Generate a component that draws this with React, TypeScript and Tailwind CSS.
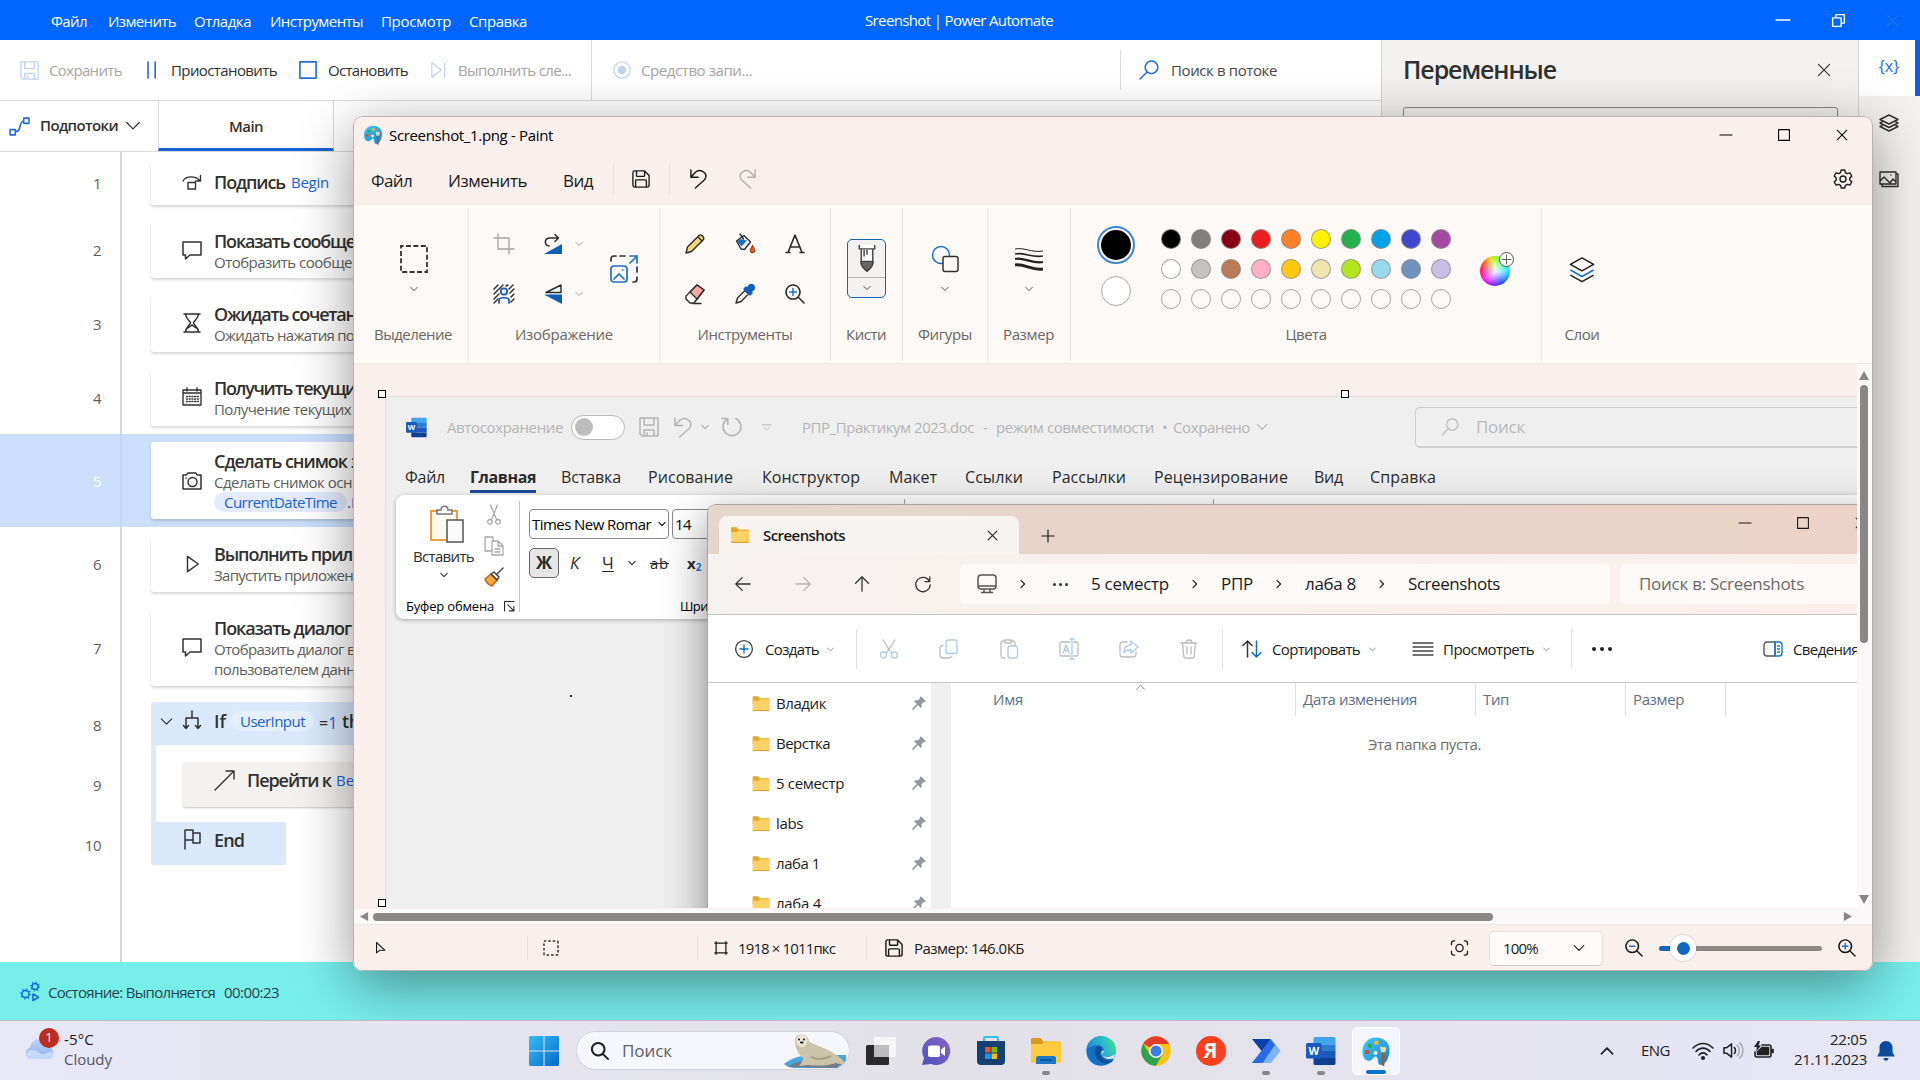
import { useLayoutEffect, useRef, type ReactNode } from "react";

/* Label whose letter spacing is adjusted so the text fills its slot. */
function T({ className = "", children }: { className?: string; children: string }) {
  const box = useRef<HTMLDivElement>(null);
  const text = useRef<HTMLSpanElement>(null);
  useLayoutEffect(() => {
    const b = box.current;
    const t = text.current;
    if (!b || !t) return;
    t.style.letterSpacing = "0px";
    const diff = b.clientWidth - t.getBoundingClientRect().width;
    t.style.letterSpacing = `${diff / children.length}px`;
  }, [children]);
  return (
    <div ref={box} className={`shrink-0 whitespace-pre ${className}`}>
      <span ref={text}>{children}</span>
    </div>
  );
}

/* Stroked icon on a 20-unit grid. */
function I({ d, className = "size-5", sw = 1.3, children }: { d?: string; className?: string; sw?: number; children?: ReactNode }) {
  return (
    <svg viewBox="0 0 20 20" className={`shrink-0 overflow-visible ${className}`} fill="none" stroke="currentColor" strokeWidth={sw} strokeLinecap="round" strokeLinejoin="round">
      {d && <path d={d} />}
      {children}
    </svg>
  );
}

const Chev = ({ className = "w-[10px] h-[10px]", sw = 2.2 }: { className?: string; sw?: number }) => <I className={className} sw={sw} d="M2 6l8 8 8-8" />;
const ChevR = () => <I className="ml-[22px] h-[12px] w-[8px]" sw={2.8} d="M5 1l9 9-9 9" />;
const Sep = ({ className = "" }: { className?: string }) => <div className={`w-px shrink-0 ${className}`} />;

const CLOSE = "M2 2l16 16M18 2L2 18";
const SAVE = "M3 1h11l5 5v11a2 2 0 0 1-2 2H3a2 2 0 0 1-2-2V3a2 2 0 0 1 2-2zM5 1v5a1 1 0 0 0 1 1h7a1 1 0 0 0 1-1V1M4 19v-7a1 1 0 0 1 1-1h10a1 1 0 0 1 1 1v7";
const SAVE_SQ = "M1 1h18v18H3l-2-2zM5 1v7h10V1M5 19v-6h10v6M8 19v-3";
const UNDO = "M1 0v8h8M1 8l5-5.500C11-2 21 3 16.500 10.500L6 20";
const SEARCH = "M7.8 12.2L1 19M12.5 1a6.3 6.3 0 1 0 .01 0z";
const ZOOM = "M8 1a7 7 0 1 0 .01 0zM13 13l6 6";

const MSG = "M1 2h18v13H8l-4.5 4V15H1z";

function Folder({ className = "w-[18px] h-[16px]" }: { className?: string }) {
  return (
    <svg viewBox="0 0 18 16" className={`shrink-0 ${className}`}>
      <path d="M0 1.5C0 .7.5.2 1.2.2h4.6L7.8 2.500H16.500c1 0 1.500.5 1.500 1.300V8H0z" fill="#e6a921" />
      <path d="M0 5h6.500l1.500-1.600h10V15a1 1 0 0 1-1 1H1a1 1 0 0 1-1-1z" fill="#fdd367" />
      <path d="M0 14.800h18V15a1 1 0 0 1-1 1H1a1 1 0 0 1-1-1z" fill="#e0a32a" />
    </svg>
  );
}

function Palette({ className = "" }: { className?: string }) {
  return (
    <svg viewBox="0 0 28 30" className={`shrink-0 ${className}`}>
      <defs>
        <linearGradient id="pal" x1="0" y1="0" x2="1" y2="1">
          <stop offset="0" stopColor="#43cdf5" />
          <stop offset="1" stopColor="#1180cf" />
        </linearGradient>
      </defs>
      <path d="M14 .5C22 .5 28 6 28 13c0 8-4 16-9 16-4 0-2-6-4.500-8.500-3-1.500-4 5-8 4C2 24.500 0 20 0 14.500 0 7 6 .5 14 .5z" fill="url(#pal)" />
      <circle cx="14.500" cy="6" r="2.400" fill="#f8b62d" />
      <circle cx="7.500" cy="9" r="2.400" fill="#2fa84f" />
      <circle cx="4.800" cy="15.500" r="2.400" fill="#c5502c" />
      <circle cx="13.500" cy="16.500" r="2" fill="#fff" />
      <path d="M18 10l1.500 6h4L25 10l-1.500 1-1.200-1.400L21 11l-1.300-1.300z" fill="#f2d6a8" />
      <path d="M20 16h3l-.5 14h-2z" fill="#a8581f" />
    </svg>
  );
}

function WordLogo({ className = "" }: { className?: string }) {
  return (
    <svg viewBox="0 0 30 30" className={`shrink-0 ${className}`}>
      <path d="M9 1h19a1.500 1.500 0 0 1 1.500 1.500V8.500H7.500v-6A1.500 1.500 0 0 1 9 1z" fill="#41a5ee" />
      <path d="M7.500 8.500h22V15h-22z" fill="#2b7cd3" />
      <path d="M7.500 15h22v7h-22z" fill="#185abd" />
      <path d="M7.500 22h22v5.500A1.500 1.500 0 0 1 28 29H9a1.500 1.500 0 0 1-1.500-1.500z" fill="#103f91" />
      <rect x="0" y="7" width="15.500" height="15.500" rx="1.500" fill="#185abd" />
      <text x="7.750" y="18.800" textAnchor="middle" fontSize="11" fontWeight="700" fill="#fff">W</text>
    </svg>
  );
}

/* ---------- Power Automate ---------- */

const paMenu = [
  ["Файл", "w-[36px] mr-[21px]"],
  ["Изменить", "w-[68px] mr-[18px]"],
  ["Отладка", "w-[57px] mr-[19px]"],
  ["Инструменты", "w-[93px] mr-[18px]"],
  ["Просмотр", "w-[70px] mr-[18px]"],
  ["Справка", "w-[58px]"],
];

function TitleBar() {
  return (
    <div className="flex h-10 shrink-0 items-center bg-[#0066ff] pl-[51px] text-[15px] text-white">
      {paMenu.map(([t, c]) => (
        <T key={t} className={`mt-[2px] ${c}`}>{t}</T>
      ))}
      <T className="ml-[338px] w-[188px]">Sreenshot | Power Automate</T>
      <div className="mr-px ml-auto flex">
        <div className="grid w-14 place-items-center"><I className="size-[14px]" sw={2} d="M0 10h20" /></div>
        <div className="grid w-[54px] place-items-center"><I className="size-[13px]" sw={2.2} d="M1 6h13v13H1zM6 5V1h13v13h-4" /></div>
        <div className="grid w-[54px] place-items-center text-[#3c7ee8]"><I className="size-[13px]" sw={1.5} d={CLOSE} /></div>
      </div>
    </div>
  );
}

function Toolbar() {
  return (
    <div className="flex h-[61px] shrink-0 items-center border-b border-[#dcdcdc] bg-white pl-5 text-[15px] text-[#323130]">
      <I className="size-[19px] text-[#bfd3f5]" sw={1.4} d={SAVE_SQ} />
      <T className="ml-[10px] w-[73px] text-[#a8a6a4]">Сохранить</T>
      <I className="ml-[22px] h-4 w-4 text-[#2469e0]" sw={2} d="M5 0v20M14 0v20" />
      <T className="ml-[11px] w-[106px]">Приостановить</T>
      <I className="ml-[22px] size-[18px] text-[#2469e0]" sw={1.8} d="M1 1h18v18H1z" />
      <T className="ml-[11px] w-[80px]">Остановить</T>
      <I className="ml-[22px] h-[16px] w-[18px] text-[#bfd3f5]" sw={1.4} d="M1 1l12 9-12 9zM17 1v18" />
      <T className="ml-[10px] w-[113px] text-[#a8a6a4]">Выполнить сле...</T>
      <Sep className="ml-[20px] h-[60px] bg-[#dcdcdc]" />
      <I className="ml-[21px] size-[18px] text-[#bfd3f5]" sw={1.3}>
        <circle cx="10" cy="10" r="9" />
        <circle cx="10" cy="10" r="4" fill="currentColor" />
      </I>
      <T className="ml-[10px] w-[111px] text-[#a8a6a4]">Средство запи...</T>
      <Sep className="ml-[368px] h-[40px] bg-[#dcdcdc]" />
      <I className="ml-[18px] size-5 text-[#2469e0]" sw={1.4} d={SEARCH} />
      <T className="ml-[12px] w-[106px] text-[#4a4947]">Поиск в потоке</T>
    </div>
  );
}

function Tabs() {
  return (
    <div className="flex h-[51px] shrink-0 items-center border-b border-[#dcdcdc] bg-white text-[#323130]">
      <I className="ml-[9px] size-[21px] text-[#2469e0]" sw={1.5} d="M1 13h5v5H1zM14 2h5v5h-5zM6 15c3 0 4-2 4.500-5S12 5 14 4.500" />
      <T className="mb-[2px] ml-[10px] w-[78px] text-[15px] font-semibold">Подпотоки</T>
      <I className="ml-[8px] size-[14px]" sw={1.7} d="M1 5l9 9 9-9" />
      <div className="ml-[18px] flex h-full w-[176px] items-center justify-center border-x border-b-[3px] border-x-[#dcdcdc] border-b-[#1863d6]">
        <T className="mt-[3px] w-[34px] text-[15px] font-semibold">Main</T>
      </div>
    </div>
  );
}

function Row({ n, h, active, children }: { n: string; h: string; active?: boolean; children: ReactNode }) {
  return (
    <div className={`flex shrink-0 ${h} ${active ? "bg-[#cbdffc]" : ""}`}>
      <div className={`flex h-full w-[122px] shrink-0 items-center justify-end border-r-2 pt-[2px] pr-[19px] text-[15px] tracking-[-0.5px] ${active ? "border-[#c3d7f5] text-white" : "border-[#d8d8d8] text-[#605e5c]"}`}>{n}</div>
      <div className="ml-[29px] flex flex-1 flex-col">{children}</div>
    </div>
  );
}

const Card = ({ icon, pad = "pt-[1px]", children }: { icon: ReactNode; pad?: string; children: ReactNode }) => (
  <div className="mt-2 mb-[8px] flex flex-1 items-center rounded-[3px] bg-white shadow-[0_2px_3px_rgba(0,0,0,0.16)]">
    <div className="ml-[31px] flex w-5 justify-center text-[#323130]">{icon}</div>
    <div className={`ml-[12px] flex-1 text-[15px] leading-[20px] text-[#605e5c] ${pad}`}>{children}</div>
  </div>
);

const H = ({ className, children }: { className: string; children: string }) => (
  <T className={`text-[18px] leading-[22px] font-semibold text-[#323130] ${className}`}>{children}</T>
);

function Actions() {
  return (
    <div className="flex flex-1 flex-col bg-white">
      <Row n="1" h="h-[61px]">
        <Card pad="pb-[2px]" icon={<I className="size-5" sw={1.4} d="M1 8c3-5.500 13-5.500 17 0M18.500 2.500V8h-5M6 9.500h7.500v6.500H6z" />}>
          <div className="flex items-center">
            <H className="w-[71px]">Подпись</H>
            <T className="ml-[6px] w-[38px] text-[#1863d6]">Begin</T>
          </div>
        </Card>
      </Row>
      <Row n="2" h="h-[73px]">
        <Card pad="pt-[3px]" icon={<I sw={1.5} d={MSG} />}>
          <H className="w-[141px]">Показать сообще</H>
          <T className="w-[138px]">Отобразить сообще</T>
        </Card>
      </Row>
      <Row n="3" h="h-[74px]">
        <Card pad="pt-[2px]" icon={<I sw={1.5} d="M2 1h16M2 19h16M3.500 1c0 5 5 7 5 9s-5 4-5 9M16.500 1c0 5-5 7-5 9s5 4 5 9M6 15l4-3 4 3" />}>
          <H className="w-[142px]">Ожидать сочетан</H>
          <T className="w-[140px]">Ожидать нажатия по</T>
        </Card>
      </Row>
      <Row n="4" h="h-[74px]">
        <Card pad="pt-[2px]" icon={<I sw={1.4}><path d="M1 3h18v15H1zM1 6h18M5 1v3M15 1v3" /><path d="M4.500 9.500h12M4.500 12h12M4.500 14.500h12" strokeDasharray="1 1.700" /></I>}>
          <H className="w-[142px]">Получить текущи</H>
          <T className="w-[137px]">Получение текущих</T>
        </Card>
      </Row>
      <Row n="5" h="h-[93px]" active>
        <Card pad="pt-0" icon={<I sw={1.5}><path d="M1 4h3l2-2h8l1 2h4v14H1z" /><circle cx="10.500" cy="11" r="4.500" /><path d="M4 7h.1" /></I>}>
          <div className="flex overflow-hidden"><H className="w-[133px]">Сделать снимок</H><H className="ml-[4px] w-[8px]">э</H></div>
          <T className="w-[138px]">Сделать снимок осн</T>
          <div className="flex items-center">
            <div className="flex h-[20px] w-[133px] items-center justify-center rounded-full bg-[#e3ecfd] text-[#1863d6]">
              <T className="w-[113px]">CurrentDateTime</T>
            </div>
            <span className="text-[#1863d6]">.F</span>
          </div>
        </Card>
      </Row>
      <Row n="6" h="h-[73px]">
        <Card icon={<I className="size-[18px]" sw={1.6} d="M5 1.500l12 8.500-12 8.500z" />}>
          <H className="w-[138px]">Выполнить прил</H>
          <T className="w-[139px]">Запустить приложен</T>
        </Card>
      </Row>
      <Row n="7" h="h-[94px]">
        <Card icon={<I sw={1.5} d={MSG} />}>
          <H className="w-[137px]">Показать диалог</H>
          <T className="w-[141px]">Отобразить диалог в</T>
          <T className="w-[141px]">пользователем данн</T>
        </Card>
      </Row>
      <Row n="8" h="h-[60px]">
        <div className="mt-2 flex h-[43px] shrink-0 items-start rounded-t-[3px] bg-[#dbe8fd] pt-[8px] text-[#323130]">
          <Chev className="mt-[5px] ml-[9px] size-[13px]" sw={1.8} />
          <I className="mt-[1px] ml-[9px] size-5" sw={1.5} d="M10 0v6M4 17V7h12v10M1.500 14.500L4 17.500l2.500-3M13.500 14.500l2.500 3 2.500-3" />
          <H className="ml-[12px] w-[12px]">If</H>
          <div className="mt-px ml-[5px] flex h-[20px] w-[83px] items-center justify-center rounded-full bg-[#e6effe] text-[15px] text-[#1863d6]">
            <T className="w-[65px]">UserInput</T>
          </div>
          <div className="mt-[1px] ml-[5px] w-[23px] text-[16px]">=<span className="text-[#1863d6]">1</span></div>
          <H className="w-[18px]">th</H>
        </div>
        <div className="w-[5px] flex-1 bg-[#dbe8fd]" />
      </Row>
      <Row n="9" h="h-[60px]">
        <div className="flex h-full border-l-[5px] border-[#dbe8fd]">
          <div className="mt-2 ml-[27px] flex h-[45px] flex-1 items-start rounded-[3px] bg-[#f3f2f1] pt-[7px] shadow-[0_1px_2px_rgba(0,0,0,0.22)]">
            <I className="mt-[1px] ml-[32px] size-5 text-[#323130]" sw={1.4} d="M0 20L19 1M11 1h8v8" />
            <H className="ml-[12px] w-[84px]">Перейти к</H>
            <T className="ml-[5px] w-[18px] text-[15px] text-[#1863d6]">Be</T>
          </div>
        </div>
      </Row>
      <Row n="10" h="h-[60px]">
        <div className="h-[8px] w-[5px] shrink-0 bg-[#dbe8fd]" />
        <div className="flex h-[43px] w-[135px] shrink-0 rounded-[3px] rounded-tl-none bg-[#dbe8fd] pt-[7px]">
          <I className="ml-[32px] size-5 text-[#323130]" sw={1.5} d="M2 20V1h8v10H2M10 4h7v10h-7V11" />
          <H className="ml-[11px] w-[30px]">End</H>
        </div>
      </Row>
      <Row n="" h="flex-1">
        <div />
      </Row>
    </div>
  );
}

function SidePanel() {
  return (
    <>
      <div className="w-[478px] shrink-0 border-x border-[#d5d4d3] bg-[#f3f2f1] pl-[21px]">
        <div className="mt-[14px] flex h-[32px] items-center text-[#323130]">
          <T className="w-[153px] text-[25px] font-semibold">Переменные</T>
          <I className="ml-[261px] size-[14px]" sw={1.6} d={CLOSE} />
        </div>
        <div className="mt-[21px] h-[44px] w-[435px] rounded-[3px] border border-[#8a8886]" />
      </div>
      <div className="flex flex-1 flex-col bg-[#f3f2f1] text-[#323130]">
        <div className="flex h-[56px] items-center border-r-[5px] border-[#0a5cf0] bg-white pb-[4px] pl-[19px] text-[#1f66e5]">
          <span className="w-[22px] text-center text-[16px]">{"{x}"}</span>
        </div>
        <div className="flex h-[56px] items-center pb-[2px] pl-[20px]">
          <I className="size-5" sw={1.4} d="M10 2l9 4.500-9 4.500-9-4.500zM3 9l-2 1 9 4.500 9-4.500-2-1M3 12.500l-2 1 9 4.500 9-4.500-2-1" />
        </div>
        <div className="flex h-[56px] items-center pb-[2px] pl-[20px]">
          <I className="size-5" sw={1.4} d="M1 3h16v12H1zM17 5h2v12.500H3V15M1 12l4-4 6 6 3-4 3 3M12 6h.1" />
        </div>
      </div>
    </>
  );
}

function StatusBar() {
  return (
    <div className="flex h-[58px] shrink-0 items-center bg-[#78eeeb] pt-[2px] pl-5 text-[15px] text-[#27434d]">
      <I className="size-[20px] text-[#1668dc]" sw={1.6}>
        <circle cx="5.500" cy="12" r="3.600" />
        <circle cx="5.500" cy="12" r="5" strokeDasharray="1 2.920" strokeLinecap="butt" />
        <circle cx="15" cy="4.500" r="3" />
        <circle cx="15" cy="4.500" r="4.300" strokeDasharray="1 2.380" strokeLinecap="butt" />
        <path d="M13 12l5.500 3.300-5.500 3.200z" />
      </I>
      <T className="ml-2 w-[167px]">Состояние: Выполняется</T>
      <T className="ml-[9px] w-[55px]">00:00:23</T>
    </div>
  );
}

/* ---------- Explorer ---------- */

const sideFolders = [
  ["Владик", "w-[50px]"],
  ["Верстка", "w-[54px]"],
  ["5 семестр", "w-[68px]"],
  ["labs", "w-[27px]"],
  ["лаба 1", "w-[44px]"],
  ["лаба 4", "w-[45px]"],
];

function Explorer() {
  return (
    <div className="absolute top-[107px] left-[321px] flex h-[405px] w-[1151px] flex-col overflow-hidden rounded-tl-[9px] border-t border-l border-[#a9a4a1] bg-white text-[15px] text-[#1b1b1b]">
      <div className="flex h-[49px] shrink-0 bg-gradient-to-r from-[#e5d6cb] via-[#e8d4ca] via-50% to-[#edd2c7]">
        <div className="mt-[11px] ml-[11px] flex h-[38px] w-[300px] shrink-0 items-center rounded-t-[8px] bg-[#f7f3f0] pl-[12px]">
          <Folder />
          <T className="ml-[14px] w-[82px] font-semibold">Screenshots</T>
          <I className="ml-[142px] size-[11px]" sw={1.9} d={CLOSE} />
        </div>
        <I className="mt-[25px] ml-[23px] size-[12px]" sw={2} d="M10 0v20M0 10h20" />
        <div className="mt-[12px] ml-[685px] flex h-[12px] gap-[46px]">
          <I className="size-[12px]" sw={1.8} d="M0 10h20" />
          <I className="size-[12px]" sw={1.8} d="M1 1h18v18H1z" />
          <I className="size-[12px]" sw={1.8} d={CLOSE} />
        </div>
      </div>
      <div className="flex h-[60px] shrink-0 items-center bg-gradient-to-r from-[#f6f2ef] to-[#fbefec] pl-[27px] text-[#333]">
        <I className="size-4" sw={1.6} d="M19 10H1M9 2l-8 8 8 8" />
        <I className="ml-[44px] size-4 text-[#b9b5b3]" sw={1.6} d="M1 10h18M11 2l8 8-8 8" />
        <I className="ml-[43px] size-4" sw={1.6} d="M10 19V1M2 9l8-8 8 8" />
        <I className="ml-[45px] size-4" sw={1.6} d="M18.500 1v6h-6M18 6.500A9 9 0 1 0 19 11" />
        <div className="ml-[29px] flex h-10 w-[650px] shrink-0 items-center rounded-[5px] bg-[#fcfaf9] pl-[17px] text-[17px] text-[#1b1b1b]">
          <I className="size-5 text-[#555]" sw={1.5} d="M4 1h12a3 3 0 0 1 3 3v8a3 3 0 0 1-3 3H4a3 3 0 0 1-3-3V4a3 3 0 0 1 3-3zM1 12h18M7 15v3.500M13 15v3.500M4.500 18.500h11" />
          <ChevR />
          <div className="ml-[26px] flex w-[16px] gap-[3px]">
            <i className="size-[3px] rounded-full bg-[#333]" /><i className="size-[3px] rounded-full bg-[#333]" /><i className="size-[3px] rounded-full bg-[#333]" />
          </div>
          <T className="ml-[22px] w-[78px]">5 семестр</T>
          <ChevR />
          <T className="ml-[22px] w-[32px]">РПР</T>
          <ChevR />
          <T className="ml-[22px] w-[51px]">лаба 8</T>
          <ChevR />
          <T className="ml-[22px] w-[92px]">Screenshots</T>
        </div>
        <div className="ml-[10px] flex h-10 flex-1 items-center rounded-l-[5px] bg-[#fdf9f8] pl-[19px] text-[17px] text-[#6b6967]">
          <T className="w-[165px]">Поиск в: Screenshots</T>
        </div>
      </div>
      <div className="flex h-[69px] shrink-0 items-center border-y border-[#c9c6c4] pt-px pl-[27px]">
        <I className="size-[18px]" sw={1.5}>
          <circle cx="10" cy="10" r="9.300" stroke="#444" /><path d="M10 5.500v9M5.500 10h9" stroke="#0f6cbd" />
        </I>
        <T className="ml-[12px] w-[54px]">Создать</T>
        <Chev className="ml-[8px] size-[7px] text-[#777]" />
        <Sep className="ml-[22px] h-10 bg-[#e3e3e3]" />
        <div className="ml-[22px] flex gap-10 text-[#a9cbea]">
          <I sw={1.3}><path d="M4 1l8.500 13M16 1L7.500 14" stroke="#bdbdbd" /><circle cx="4.500" cy="16" r="3" /><circle cx="15.500" cy="16" r="3" /></I>
          <I sw={1.3}><path d="M4 6.500c-2 0-3 1-3 2.500v7c0 2 1 3 3 3h6c1.500 0 2.500-1 3-2" stroke="#bdbdbd" /><rect x="7" y="1" width="11" height="13.500" rx="2" /></I>
          <I sw={1.3}><path d="M6 19H4a2 2 0 0 1-2-2V4a2 2 0 0 1 2-2h2M12 2h2a2 2 0 0 1 2 2v2M6 1h6v3H6z" stroke="#bdbdbd" /><rect x="9" y="7" width="9.500" height="12" rx="2" /></I>
          <I sw={1.3}><path d="M11 3H3a2 2 0 0 0-2 2v10a2 2 0 0 0 2 2h8M15 3h2a2 2 0 0 1 2 2v10a2 2 0 0 1-2 2h-2" stroke="#bdbdbd" /><path d="M13 0v20M11 0h4M11 20h4M4 14l3.200-8 3.200 8M5 11.500h4.400" /></I>
          <I sw={1.3}><path d="M8 3H4a3 3 0 0 0-3 3v9a3 3 0 0 0 3 3h10a3 3 0 0 0 3-3v-2" stroke="#bdbdbd" /><path d="M12 2l7 6-7 6v-3.500c-3 0-5 .5-7 3.500 0-5 3-8 7-8.500z" /></I>
          <I sw={1.3}><path d="M2 4h16M3.500 4l1.300 13a2 2 0 0 0 2 2h6.400a2 2 0 0 0 2-2l1.300-13M7 4a3 3 0 0 1 6 0M8 8v7M12 8v7" stroke="#bdbdbd" /></I>
        </div>
        <Sep className="ml-[23px] h-10 bg-[#e3e3e3]" />
        <I className="ml-[19px] size-5" sw={1.5}><path d="M5.500 18V2M1 6.500L5.500 2 10 6.500" stroke="#333" /><path d="M14.500 2v16M10 13.500l4.500 4.500 4.500-4.500" stroke="#0f6cbd" /></I>
        <T className="ml-[10px] w-[88px]">Сортировать</T>
        <Chev className="ml-[9px] size-[7px] text-[#777]" />
        <I className="ml-[37px] size-5 text-[#444]" sw={1.3} d="M0 4h20M0 8h20M0 12h20M0 16h20" />
        <T className="ml-[10px] w-[91px]">Просмотреть</T>
        <Chev className="ml-[9px] size-[7px] text-[#777]" />
        <Sep className="ml-[21px] h-10 bg-[#e3e3e3]" />
        <div className="ml-[20px] flex w-[20px] shrink-0 gap-[4px]">
          <i className="size-[4px] rounded-full bg-[#222]" /><i className="size-[4px] rounded-full bg-[#222]" /><i className="size-[4px] rounded-full bg-[#222]" />
        </div>
        <I className="ml-[151px] size-5" sw={1.4}>
          <path d="M12 3H4a3 3 0 0 0-3 3v8a3 3 0 0 0 3 3h8z" stroke="#555" /><path d="M12 3h4a3 3 0 0 1 3 3v8a3 3 0 0 1-3 3h-4zM14.500 7h2M14.500 10h2M14.500 13h2" stroke="#0f78d4" />
        </I>
        <T className="ml-[10px] w-[66px]">Сведения</T>
      </div>
      <div className="flex flex-1 overflow-hidden">
        <div className="w-[223px] shrink-0">
          {sideFolders.map(([t, c]) => (
            <div key={t} className="flex h-10 items-center pl-[44px]">
              <Folder className="h-[15px] w-[18px]" />
              <T className={`ml-[6px] ${c}`}>{t}</T>
              <svg viewBox="0 0 20 20" className="mr-[5px] ml-auto size-[14px] fill-[#8f969c]"><path d="M12.500 0L20 7.500l-2 1-1-.3-3.500 3.500c.7 2 .3 4-1 5.300l-4-4L1.500 20 0 18.500 7 11.500l-4-4C4.300 6.200 6.300 5.800 8.300 6.500L11.800 3l-.3-1z" /></svg>
            </div>
          ))}
        </div>
        <div className="w-5 shrink-0 bg-[#f0f0f0]" />
        <div className="flex-1">
          <div className="flex h-[33px] items-center text-[#5c6f8a]">
            <div className="flex h-full w-[345px] items-center border-r border-[#e0e0e0] pl-[42px]">
              <T className="w-[30px]">Имя</T>
              <I className="mb-[24px] ml-[113px] size-[9px] text-[#777]" sw={2} d="M1 14l9-9 9 9" />
            </div>
            <div className="flex h-full w-[180px] items-center border-r border-[#e0e0e0] pl-[7px]"><T className="w-[114px]">Дата изменения</T></div>
            <div className="flex h-full w-[150px] items-center border-r border-[#e0e0e0] pl-[7px]"><T className="w-[26px]">Тип</T></div>
            <div className="flex h-full w-[100px] items-center border-r border-[#e0e0e0] pl-[7px]"><T className="w-[51px]">Размер</T></div>
          </div>
          <T className="mt-[17px] ml-[417px] w-[113px] text-[#6d6d6d]">Эта папка пуста.</T>
        </div>
      </div>
    </div>
  );
}

/* ---------- Word ---------- */

const wordTabs = [
  ["Файл", "w-[40px]"],
  ["Главная", "ml-[25px] w-[66px]"],
  ["Вставка", "ml-[25px] w-[60px]"],
  ["Рисование", "ml-[27px] w-[85px]"],
  ["Конструктор", "ml-[29px] w-[98px]"],
  ["Макет", "ml-[29px] w-[48px]"],
  ["Ссылки", "ml-[28px] w-[58px]"],
  ["Рассылки", "ml-[29px] w-[74px]"],
  ["Рецензирование", "ml-[28px] w-[134px]"],
  ["Вид", "ml-[26px] w-[29px]"],
  ["Справка", "ml-[27px] w-[66px]"],
];

function Word() {
  return (
    <div className="relative mt-[32px] ml-[32px] flex h-[512px] w-[1472px] shrink-0 flex-col overflow-hidden border-t border-l border-[#e6dfdb] bg-[#efefef] text-[#2b2b2b]">
      <div className="flex h-[60px] shrink-0 items-center pl-[20px] text-[15px] text-[#b5b5b5]">
        <WordLogo className="size-[21px]" />
        <T className="ml-[20px] w-[116px]">Автосохранение</T>
        <div className="ml-[8px] flex h-[25px] w-[54px] shrink-0 items-center rounded-full border border-[#b9b9b9] bg-white pl-[3px]">
          <div className="size-[18px] rounded-full bg-[#bdbdbd]" />
        </div>
        <I className="ml-[14px] size-[20px]" sw={1.5} d={SAVE_SQ} />
        <I className="ml-[15px] size-[19px]" sw={1.6} d={UNDO} />
        <Chev className="ml-[8px] size-[8px]" sw={3} />
        <I className="ml-[12px] size-[21px]" sw={1.5} d="M1 1.500h5.500V7M6 2A8.500 8.500 0 1 0 14 1.500" />
        <I className="ml-[20px] size-[9px]" sw={2} d="M1 4h18M4 10l6 6 6-6" />
        <T className="ml-[31px] w-[172px]">РПР_Практикум 2023.doc</T>
        <T className="ml-[9px] w-[5px]">-</T>
        <T className="ml-[8px] w-[158px]">режим совместимости</T>
        <T className="ml-[8px] w-[5px]">•</T>
        <T className="ml-[6px] w-[77px]">Сохранено</T>
        <Chev className="ml-[6px] size-[12px]" sw={1.8} />
        <div className="ml-[147px] flex h-[41px] flex-1 items-center rounded-l-[5px] border border-r-0 border-b-2 border-[#cfcfcf] pl-[25px] text-[17px] text-[#b9b9b9]">
          <I className="size-[18px]" sw={1.3} d={SEARCH} />
          <T className="ml-[17px] w-[49px]">Поиск</T>
        </div>
      </div>
      <div className="flex h-[38px] shrink-0 items-start pl-[19px] text-[16px]">
        {wordTabs.map(([t, c]) => (
          <div key={t} className={`flex h-[36px] shrink-0 items-center border-b-[3px] pt-[7px] ${c} ${t === "Главная" ? "border-b-[#1e4a94] font-bold" : "border-b-transparent"}`}>
            <T className="w-full">{t}</T>
          </div>
        ))}
      </div>
      <div className="ml-[10px] flex h-[124px] shrink-0 rounded-l-[8px] bg-white shadow-[0_1px_4px_rgba(0,0,0,0.3)]">
        <div className="flex w-[123px] shrink-0 flex-col">
          <div className="flex h-[99px]">
            <div className="ml-[17px] flex w-[61px] flex-col items-center pt-[10px]">
              <svg viewBox="0 0 34 38" className="ml-[7px] h-[38px] w-[34px]" fill="none" strokeWidth="2">
                <path d="M1 6h26v29H1z" stroke="#eda13a" fill="#fff8ee" />
                <path d="M7 9V5h4c0-5 7-5 7 0h4v4z" fill="#fff" stroke="#777" strokeWidth="1.500" />
                <path d="M17 15h16v22H17z" fill="#fafafa" stroke="#555" strokeWidth="1.500" />
              </svg>
              <T className="mt-[2px] w-[61px] text-[15px] leading-[22px]">Вставить</T>
              <Chev className="mt-[4px] size-[8px]" sw={2.6} />
            </div>
            <div className="ml-[10px] flex w-5 flex-col pt-[10px] text-[#a8a8a8]">
              <I className="h-[20px] w-[20px]" sw={1.3} d="M6.500 0l6 14.500M13.500 0l-6 14.500M6 14.500a2.300 2.300 0 1 0 .01 0zM14 14.500a2.300 2.300 0 1 0 .01 0z" />
              <I className="mt-[11px] h-[20px] w-[20px]" sw={1.3} d="M8 15H1V1h8v3M8 5h6l5 5v9H8zM14 5v5h5M11 13h5M11 16h5" />
              <I className="mt-[11px] h-[20px] w-[20px]" sw={1.5}><path d="M1 12l6-5 6 6-5 6c-3-1-6-4-7-7z" fill="#f6a63c" stroke="#c8621b" /><path d="M7 7l3-2 5 5-2 3zM13 7l6-6" stroke="#444" /></I>
            </div>
          </div>
          <div className="flex items-center pl-[10px]">
            <T className="w-[88px] text-[13px] leading-[24px] text-black">Буфер обмена</T>
            <I className="ml-[10px] size-[11px]" sw={2} d="M1 18V1h17M7 7l11 11M18 10v8h-8" />
          </div>
        </div>
        <Sep className="mt-[6px] h-[111px] bg-[#c8c8c8]" />
        <div className="ml-[9px] w-[213px] shrink-0 pt-[14px]">
          <div className="flex gap-[3px]">
            <div className="flex h-[30px] w-[140px] items-center rounded-[4px] border border-[#8a8a8a] pl-[2px] text-[15px] text-black">
              <T className="w-[119px]">Times New Romar</T>
              <Chev className="ml-[7px] size-[8px]" sw={2.6} />
            </div>
            <div className="flex h-[30px] w-[70px] items-center rounded-[4px] border border-[#8a8a8a] pl-[2px] text-[15px] text-black"><T className="w-[16px]">14</T></div>
          </div>
          <div className="mt-[9px] flex h-[30px] items-center text-[17px]">
            <div className="grid size-[30px] place-items-center rounded-[5px] border border-[#666] bg-[#e6e6e6] font-bold">Ж</div>
            <span className="ml-[11px] w-[14px] italic">К</span>
            <span className="ml-[18px] w-[13px] underline underline-offset-2">Ч</span>
            <Chev className="ml-[13px] size-[8px]" sw={2.6} />
            <T className="ml-[14px] w-[19px] text-[15px] line-through">ab</T>
            <span className="ml-[18px] text-[15px] font-bold">x<sub className="text-[10px] text-[#2b7cd3]">2</sub></span>
          </div>
          <T className="mt-[16px] ml-[151px] w-[28px] text-[13px] leading-[24px] text-black">Шри</T>
        </div>
        <Sep className="mt-[4px] ml-[162px] h-2 bg-[#aaa]" />
        <Sep className="mt-[4px] ml-[308px] h-2 bg-[#aaa]" />
      </div>
      <div className="flex-1 pt-[76px] pl-[184px]"><div className="size-[2px] bg-[#333]" /></div>
      <div className="absolute top-[107px] left-[321px] h-[504px] w-[1300px] rounded-[9px] shadow-[0_14px_44px_rgba(0,0,0,0.45)]" />
      <Explorer />
    </div>
  );
}

/* ---------- Paint ---------- */

const palette = [
  "bg-black", "bg-[#7f7f7f]", "bg-[#880015]", "bg-[#ed1c24]", "bg-[#ff7f27]", "bg-[#fff200]", "bg-[#22b14c]", "bg-[#00a2e8]", "bg-[#3f48cc]", "bg-[#a349a4]",
  "bg-white", "bg-[#c3c3c3]", "bg-[#b97a57]", "bg-[#ffaec9]", "bg-[#ffc90e]", "bg-[#efe4b0]", "bg-[#b5e61d]", "bg-[#99d9ea]", "bg-[#7092be]", "bg-[#c8bfe7]",
  "", "", "", "", "", "", "", "", "", "",
];

function Section({ w, label, lw, children }: { w: string; label: string; lw: string; children: ReactNode }) {
  return (
    <div className={`flex h-[153px] shrink-0 flex-col items-center ${w}`}>
      <div className="h-[113px] w-full">{children}</div>
      <T className={`text-[15px] leading-[26px] text-[#6a6765] ${lw}`}>{label}</T>
    </div>
  );
}
const Drop = ({ icon }: { icon: ReactNode }) => (
  <div className="flex flex-col items-center pt-[37px]">
    {icon}
    <Chev className="mt-[12px] size-[8px]" sw={2} />
  </div>
);
const line = "border-r border-[#e9e5e2]";

function Ribbon() {
  return (
    <div className="flex h-[160px] shrink-0 border-y border-[#efe9e6] bg-[#fcf9f6] pt-[3px] text-[#2b2b2b]">
      <Section w={`w-[116px] pl-[5px] ${line}`} label="Выделение" lw="w-[78px]">
        <div className="ml-[2px]">
          <Drop icon={<svg viewBox="0 0 28 28" className="size-7" fill="none" stroke="#333" strokeWidth="1.800"><rect x="1" y="1" width="26" height="26" strokeDasharray="5 2.430" strokeDashoffset="2.500" /></svg>} />
        </div>
      </Section>
      <Section w={`w-[191px] ${line}`} label="Изображение" lw="w-[98px]">
        <div className="mt-[26px] flex h-[70px] items-center pl-[25px]">
          <div className="flex flex-col gap-[30px]">
            <I sw={1.3} className="size-5 text-[#a5a2a0]" d="M4 0v15h16M0 4h15v16" />
            <I sw={1.4}>
              <path d="M0 5l4-4M0 10L9 1M0 15l5-5M0 19l4-4M12 2l2-1M15 5l4-4M16 9l4-4M17 13l3-3M17 18l3-3" />
              <circle cx="10" cy="7.500" r="3.200" stroke="#1458b8" strokeWidth="1.700" /><path d="M5 19v-3c0-3 10-3 10 0v3" stroke="#1458b8" strokeWidth="1.700" />
            </I>
          </div>
          <div className="ml-[30px] flex flex-col gap-[30px]">
            <I sw={1.5}><path d="M0 20h18V10z" fill="#0f5fb8" stroke="none" /><path d="M5 12c-5-1-5-8 1-8h8M11 .5L14.500 4 11 7.500" /></I>
            <I sw={1.4}><path d="M17 1v7.500H2z" /><path d="M0 10.500h18V20z" fill="#0f5fb8" stroke="none" /></I>
          </div>
          <div className="ml-[11px] flex flex-col gap-[42px] text-[#8a8785]">
            <Chev className="size-[8px]" sw={2} />
            <Chev className="size-[8px]" sw={2} />
          </div>
          <svg viewBox="0 0 28 28" className="ml-[27px] size-7" fill="none" strokeWidth="1.700" strokeLinecap="round">
            <path d="M1 6V4c0-2 1-3 3-3h2M10 1h5M27 12v5M27 22v2c0 2-1 3-3 3h-1" stroke="#333" />
            <rect x="1" y="11" width="16" height="16" rx="3" stroke="#1e6fc8" /><path d="M4 24l5-5 5 5M12.500 15h.2M20 8l7-7M20 1h7v7" stroke="#1e6fc8" />
          </svg>
        </div>
      </Section>
      <Section w={`w-[171px] ${line}`} label="Инструменты" lw="w-[95px]">
        <div className="mt-[26px] ml-[25px] grid grid-cols-[20px_20px_20px] gap-[30px]">
          <I sw={1.4}><path d="M1 19l1.500-6L14 1.500c2-2 6 2 4.300 4.300L6.500 17.500z" fill="#f3d675" /><path d="M13 3l4 4" /></I>
          <I sw={1.4}>
            <path d="M1.500 7L9 1.500l6.500 6.500-6 7.500-3.500-.500z" fill="#fff" />
            <path d="M2 7.500l3-2.500 7 1.500-5.500 6z" fill="#1e6fc8" stroke="none" />
            <path d="M5 0l3.500 5" />
            <path d="M17.500 11.500c1.600 2.600 2.300 3.700 2.300 5a2.300 2.300 0 0 1-4.600 0c0-1.300.8-2.400 2.300-5z" fill="#e8562a" stroke="#8a2f12" strokeWidth="1" />
          </I>
          <I sw={1.6} d="M3 18.500L10 1l7 17.500M5 13h10M1 18.500h4M15 18.500h4" />
          <I sw={1.4}><path d="M1 12L12 1l7 5-10 13H5l-4-4z" fill="#fff" /><path d="M5 8l7-7 7 5-7 9z" fill="#f4aaa8" /><path d="M8 19.500h8" /></I>
          <I sw={1.4}><path d="M1 19l1.500-5L10 6.500l3.500 3.500L6 17.500z" fill="#fff" /><path d="M9 5l6 6 2-2-1-1.500C19 6 20.500 4 18.500 1.500S14 1 12.500 4L11 3z" fill="#0f5fb8" stroke="#0f5fb8" /></I>
          <I sw={1.5}><path d={ZOOM} /><path d="M8 4.500v7M4.500 8h7" stroke="#1e6fc8" /></I>
        </div>
      </Section>
      <Section w={`w-[72px] pr-px ${line}`} label="Кисти" lw="w-[40px]">
        <div className="mt-[31px] ml-[16px] flex h-[59px] w-[39px] flex-col items-center rounded-[5px] border border-[#1365b8] bg-[#f4f2f0] pt-[5px]">
          <svg viewBox="0 0 18 28" className="h-[27px] w-[18px]" fill="none" stroke="#444" strokeWidth="1.500">
            <path d="M1 0v4h16V0M3 4v15l6 8 6-8V4" fill="#fff" /><path d="M3 17h12v2c0 3-3 6-6 8-3-2-6-5-6-8z" fill="#666" /><path d="M6 5v7M9 5v5" />
          </svg>
          <div className="mt-[5px] h-px w-full bg-[#b5b2b0]" />
          <Chev className="mt-[6px] size-[8px]" sw={2} />
        </div>
      </Section>
      <Section w={`w-[85px] ${line}`} label="Фигуры" lw="w-[54px]">
        <Drop icon={<svg viewBox="0 0 28 28" className="size-7 overflow-visible" fill="none" strokeWidth="1.500"><circle cx="10" cy="10" r="8.500" stroke="#1e6fc8" /><rect x="12" y="11.500" width="15" height="15" rx="2" fill="#fcf9f6" stroke="#333" /></svg>} />
      </Section>
      <Section w={`w-[83px] pr-px ${line}`} label="Размер" lw="w-[51px]">
        <Drop icon={<svg viewBox="0 0 28 28" className="size-7" fill="none" stroke="#222"><path d="M0 4c9-2 17 4 28 2" strokeWidth="1" /><path d="M0 9c9-2 17 4 28 2" strokeWidth="1.600" /><path d="M0 14c9-2 17 5 28 3" strokeWidth="2.200" /><path d="M0 20c9-2 17 6 28 4" strokeWidth="3" /></svg>} />
      </Section>
      <Section w={`w-[471px] ${line}`} label="Цвета" lw="w-[41px]">
        <div className="flex">
          <div className="ml-[26px] flex w-[38px] flex-col items-center pt-[18px]">
            <div className="grid size-[38px] place-items-center rounded-full border-2 border-[#3f86cf]"><div className="size-[30px] rounded-full bg-black" /></div>
            <div className="mt-[12px] size-[30px] rounded-full border-[1.500px] border-[#aaa7a5] bg-white" />
          </div>
          <div className="mt-[21px] ml-[26px] grid h-[80px] grid-cols-10 gap-[10px]">
            {palette.map((c, i) => (
              <div key={i} className={`size-5 rounded-full border border-[#8f8c8a]/80 ${c}`} />
            ))}
          </div>
          <div className="relative mt-[48px] ml-[29px] size-[30px] rounded-full bg-[radial-gradient(circle,#ffffff_0%,transparent_75%),conic-gradient(#8dff00,#00ff70_12%,#00e5ff_25%,#0030ff_42%,#8000ff_52%,#ff00e0_65%,#ff0040_78%,#ff5a00_87%,#ffd000_94%,#8dff00)]">
            <div className="absolute -top-[4px] -right-[4px] grid size-[15px] place-items-center rounded-full border border-[#555] bg-white text-[#555]">
              <I className="size-[9px]" sw={2} d="M10 0v20M0 10h20" />
            </div>
          </div>
        </div>
      </Section>
      <Section w="w-[80px]" label="Слои" lw="w-[35px]">
        <svg viewBox="0 0 28 28" className="mx-auto mt-[48px] h-[28px] w-[26px]" fill="none" strokeWidth="1.700" strokeLinejoin="round">
          <path d="M14 1l12.500 7L14 15 1.500 8z" stroke="#222" /><path d="M1.500 14L14 21l12.500-7" stroke="#1e6fc8" /><path d="M1.500 19.500L14 26.500l12.500-7" stroke="#222" />
        </svg>
      </Section>
    </div>
  );
}

const Tri = ({ className, d }: { className: string; d: string }) => (
  <svg viewBox="0 0 10 10" className={`shrink-0 fill-[#8a8887] ${className}`}><path d={d} /></svg>
);
const Handle = ({ className }: { className: string }) => <div className={`absolute size-[8px] border-[1.500px] border-black bg-white ${className}`} />;

function Paint() {
  return (
    <div className="absolute top-[116px] left-[353px] flex h-[855px] w-[1520px] flex-col overflow-hidden rounded-[9px] bg-[#f9f0ed] text-black">
      <div className="flex h-[38px] shrink-0 items-center pl-[11px] text-[15px]">
        <Palette className="h-[20px] w-[18px]" />
        <T className="ml-[7px] w-[164px]">Screenshot_1.png - Paint</T>
        <div className="mr-[25px] ml-auto flex gap-[46px]">
          <I className="size-[12px]" sw={1.8} d="M0 10h20" />
          <I className="size-[12px]" sw={1.8} d="M1 1h18v18H1z" />
          <I className="size-[12px]" sw={1.8} d={CLOSE} />
        </div>
      </div>
      <div className="flex h-[50px] shrink-0 items-center pl-[18px] text-[17px] text-[#1b1b1b]">
        <T className="w-[41px] pt-[3px]">Файл</T>
        <T className="ml-[36px] w-[79px] pt-[3px]">Изменить</T>
        <T className="ml-[36px] w-[30px] pt-[3px]">Вид</T>
        <Sep className="ml-[20px] h-[30px] bg-[#e8e0dd]" />
        <I className="ml-[18px] size-[18px]" sw={1.5} d={SAVE} />
        <Sep className="ml-[19px] h-[30px] bg-[#e8e0dd]" />
        <I className="ml-[20px] size-[18px]" sw={1.6} d={UNDO} />
        <I className="ml-[30px] size-[18px] -scale-x-100 text-[#b3adab]" sw={1.6} d={UNDO} />
        <I className="mr-[20px] ml-auto size-[20px]" sw={1.4}>
          <path d="M8.200 1h3.600l.6 2.600 2 1.100 2.500-.8 1.900 3.100-2 1.900v2.200l2 1.900-1.900 3.100-2.500-.8-2 1.100-.6 2.600H8.200l-.6-2.600-2-1.100-2.500.8L1.200 13l2-1.900V8.900l-2-1.900 1.900-3.100 2.500.8 2-1.100z" />
          <circle cx="10" cy="10" r="3" />
        </I>
      </div>
      <Ribbon />
      <div className="flex h-[545px] shrink-0">
        <div className="relative w-[1504px] shrink-0 overflow-hidden">
          <Word />
          <Handle className="top-[26px] left-[25px]" />
          <Handle className="top-[26px] left-[988px]" />
          <Handle className="top-[535px] left-[25px]" />
        </div>
        <div className="flex flex-1 flex-col items-center bg-[#faf8f8] pr-[2px]">
          <Tri className="mt-[7px] size-[10px]" d="M5 0l5 9H0z" />
          <div className="mt-[4px] h-[258px] w-[8px] rounded-full bg-[#8a8887]" />
          <Tri className="mt-auto mb-[5px] size-[10px]" d="M5 10L0 1h10z" />
        </div>
      </div>
      <div className="flex h-[15px] shrink-0 items-center bg-[#faf8f8] pl-[7px]">
        <Tri className="size-[9px]" d="M0 5l9-5v10z" />
        <div className="ml-[4px] h-[8px] w-[1120px] rounded-full bg-[#8a8887]" />
        <Tri className="ml-[350px] size-[9px]" d="M10 5L1 0v10z" />
      </div>
      <div className="flex flex-1 items-center border-t border-[#eee6e3] pl-[23px] text-[15px] text-[#1b1b1b]">
        <I className="h-[16px] w-[11px]" sw={2} d="M1 0v19l6-5h9z" />
        <Sep className="ml-[140px] h-6 bg-[#e8e0dd]" />
        <svg viewBox="0 0 16 16" className="ml-[15px] size-4" fill="none" stroke="#333" strokeWidth="1.500"><rect x="1" y="1" width="14" height="14" rx="1" strokeDasharray="2.600 1.900" strokeDashoffset="1.300" /></svg>
        <Sep className="ml-[138px] h-6 bg-[#e8e0dd]" />
        <I className="ml-[16px] size-[14px]" sw={1.8} d="M3 1v18M17 1v18M1 3h18M1 17h18" />
        <T className="ml-[10px] w-[97px]">1918 × 1011пкс</T>
        <Sep className="ml-[31px] h-6 bg-[#e8e0dd]" />
        <I className="ml-[18px] size-[18px]" sw={1.6} d={SAVE} />
        <T className="ml-[11px] w-[110px]">Размер: 146.0КБ</T>
        <I className="ml-[426px] h-[16px] w-[19px]" sw={1.6}>
          <path d="M0 6V4a3 3 0 0 1 3-3h1M16 1h1a3 3 0 0 1 3 3v2M20 14v2a3 3 0 0 1-3 3h-1M4 19H3a3 3 0 0 1-3-3v-2" /><circle cx="10" cy="10" r="4.500" />
        </I>
        <div className="ml-[20px] flex h-[35px] w-[114px] shrink-0 items-center rounded-[5px] border border-[#e6dfdc] border-b-[#cfc8c5] bg-[#fdfaf9] pl-[13px]">
          <T className="w-[35px]">100%</T>
          <Chev className="ml-[35px] size-[12px]" sw={1.8} />
        </div>
        <I className="ml-[22px] size-[18px]" sw={1.6}><path d={ZOOM} /><path d="M5 8h6" stroke="#1e6fc8" /></I>
        <div className="ml-[16px] flex w-[163px] shrink-0 items-center">
          <div className="h-[5px] w-[11px] rounded-l-full bg-[#0f67be]" />
          <div className="grid size-[26px] shrink-0 place-items-center rounded-full bg-white shadow-[0_0_2px_rgba(0,0,0,0.25)]"><div className="size-[13px] rounded-full bg-[#0f67be]" /></div>
          <div className="h-[5px] flex-1 rounded-r-full bg-[#8d8582]" />
        </div>
        <I className="ml-[16px] size-[18px]" sw={1.6}><path d={ZOOM} /><path d="M8 5v6M5 8h6" stroke="#1e6fc8" /></I>
      </div>
      <div className="pointer-events-none absolute inset-0 rounded-[9px] border border-[#b8b2af]" />
    </div>
  );
}

/* ---------- Taskbar ---------- */

function TaskIcon({ dot, active, children }: { dot?: boolean; active?: boolean; children: ReactNode }) {
  return (
    <div className="flex w-[55px] shrink-0 justify-center">
      <div className={`flex h-[48px] w-[48px] flex-col items-center rounded-[5px] pt-[9px] ${active ? "border border-white/60 bg-[#f4f5fd]" : ""}`}>
        <div className="h-[30px]">{children}</div>
        {dot && <div className="mt-[5px] h-[4px] w-[8px] rounded-full bg-[#85858c]" />}
        {active && <div className="mt-[4px] h-[4px] w-[20px] shrink-0 rounded-full bg-[#0b72d0]" />}
      </div>
    </div>
  );
}

function Taskbar() {
  return (
    <div className="relative z-20 flex h-[60px] shrink-0 items-center border-t border-[#c5b5c6] bg-gradient-to-r from-[#e7e7f6] via-[#e2e1e8] via-50% to-[#e7e6f6] pl-[25px] text-[15px] text-[#222]">
      <div className="relative w-[30px] shrink-0">
        <svg viewBox="0 0 30 22" className="mb-[4px] h-[22px] w-[30px]">
          <defs><linearGradient id="cl" x1="0" y1="0" x2="0" y2="1"><stop offset="0" stopColor="#b9d3fa" /><stop offset="1" stopColor="#8fb2ee" /></linearGradient></defs>
          <path d="M6 21a6 6 0 0 1-1-11.500C6 4 10 1 14 1c5 0 8.500 3.500 9 7.500A6.500 6.500 0 0 1 24 21z" fill="url(#cl)" />
          <path d="M6 21c-6 0-6-9 1-9 6 0 7 4 11 4s5-3 8-2c5 2 3 7-2 7z" fill="#cfe0fb" opacity=".8" />
        </svg>
        <div className="absolute -top-[10px] left-[14px] grid size-[20px] place-items-center rounded-full bg-[#bf2b1e] text-[13px] text-white">1</div>
      </div>
      <div className="mb-[4px] ml-[9px] w-[465px] shrink-0 leading-[20px]">
        <T className="w-[30px]">-5°C</T>
        <T className="w-[48px] text-[#55555c]">Cloudy</T>
      </div>
      <svg viewBox="0 0 30 30" className="size-[30px] shrink-0">
        <defs><linearGradient id="win" x1="0" y1="0" x2="1" y2="1"><stop offset="0" stopColor="#35bdf5" /><stop offset="1" stopColor="#0668c8" /></linearGradient></defs>
        <path d="M1 0h13.500v14.500H0V1zM15.500 0H29l1 1v13.500H15.500zM0 15.500h14.500V30H1l-1-1zM15.500 15.500H30V29l-1 1H15.500z" fill="url(#win)" />
      </svg>
      <div className="ml-[17px] flex h-[39px] w-[274px] shrink-0 items-center overflow-hidden rounded-full border border-[#d3d2df] bg-[#f6f6fd] pl-[14px]">
        <I className="size-[18px] text-[#222]" sw={2.2} d={ZOOM} />
        <T className="ml-[13px] w-[50px] text-[17px] text-[#5f5f66]">Поиск</T>
        <svg viewBox="0 0 64 36" className="ml-[112px] h-[36px] w-[64px]">
          <path d="M0 31c6-5 14-8 24-9h38c1 5-1 9-6 13H12C6 35 2 33 0 31z" fill="#4aa6dc" />
          <path d="M4 34c5-5 14-6 26-6h28l-4 7z" fill="#777b83" />
          <path d="M11 9c-1-5 3-8 7-7.500C22 2 25 5 25 9c6 3 14 5 21 9 6 3 11 7 15 12-2 2-6 1-9 0-8 3-20 3-28 2l-9 1c2-3 4-5 4-8-4-3-8-10-8-16z" fill="#cbc4aa" />
          <path d="M12 8c0-4 3-6 6-6 4 0 6 4 5 8-1 3-4 5-6 4s-5-3-5-6z" fill="#e9e4d6" />
          <path d="M15 6.500h.1M20 6.500h.1M17 9.500h1.500" stroke="#222" strokeWidth="2" strokeLinecap="round" />
          <path d="M27 24c6 3 14 2 20-1" stroke="#a39b80" strokeWidth="1.500" fill="none" />
        </svg>
      </div>
      <div className="ml-[3px] flex h-[48px]">
        <TaskIcon>
          <svg viewBox="0 0 30 30" className="size-[30px]"><rect x="0" y="9" width="23" height="20" rx="1.500" fill="#2a2a2c" /><rect x="8" y="1" width="22" height="20" rx="1" fill="#f6f6f7" opacity=".95" /><path d="M8 9h15v12H8z" fill="#bcbcbf" /></svg>
        </TaskIcon>
        <TaskIcon>
          <svg viewBox="0 0 30 30" className="size-[30px]"><defs><linearGradient id="ch" x1="0" y1="1" x2="1" y2="0"><stop offset="0" stopColor="#4b55bb" /><stop offset="1" stopColor="#8a62c8" /></linearGradient></defs><path d="M15 1a14 14 0 1 1-5 27L1 29l2-7A14 14 0 0 1 15 1z" fill="url(#ch)" /><rect x="7" y="9.500" width="12" height="11.500" rx="2" fill="#fff" /><path d="M20 13.500l4-3v9.500l-4-3z" fill="#fff" /></svg>
        </TaskIcon>
        <TaskIcon>
          <svg viewBox="0 0 30 30" className="size-[30px]"><path d="M8 6V2.500C8 1.500 8.500 1 9.500 1h11c1 0 1.500.5 1.500 1.500V6" fill="none" stroke="#35bdf2" strokeWidth="2" /><path d="M1 5h28v20a4 4 0 0 1-4 4H5a4 4 0 0 1-4-4z" fill="#163f72" /><path d="M9 11h5.500v5.500H9z" fill="#f25022" /><path d="M15.500 11H21v5.500h-5.500z" fill="#7fba00" /><path d="M9 17.500h5.500V23H9z" fill="#00a4ef" /><path d="M15.500 17.500H21V23h-5.500z" fill="#ffb900" /></svg>
        </TaskIcon>
        <TaskIcon dot>
          <svg viewBox="0 0 30 30" className="size-[30px]"><path d="M0 3.500C0 2.500.8 2 1.500 2h8l3 3.500H28l2 2V14H0z" fill="#d89a1a" /><path d="M0 8h11l2-2.500h16l1 1V26l-1 1H1l-1-1z" fill="#fccb3e" /><path d="M5 28v-6c0-1 1-2 2-2h16c1 0 2 1 2 2v6z" fill="#1f78c8" /><path d="M9 24h12" stroke="#0b4f96" strokeWidth="1.500" /></svg>
        </TaskIcon>
        <TaskIcon>
          <svg viewBox="0 0 30 30" className="size-[30px]"><defs><linearGradient id="ed" x1="0" y1=".3" x2="1" y2="0"><stop offset="0" stopColor="#1b8ddb" /><stop offset=".6" stopColor="#2cc3c4" /><stop offset="1" stopColor="#5cdc6a" /></linearGradient></defs><circle cx="15" cy="15" r="14.700" fill="#1271c4" /><path d="M.5 14C2 5 8 .3 15 .3 24 .3 30 7 30 13c0 5-4 8-9 8-3 0-5-1-5-2.500s2-1.500 2-4c0-3-3-5-7-5S2 11 .5 14z" fill="url(#ed)" /><path d="M11.500 9.700C7 13 8 26 20 27.500c4 0 6-1.500 8-4-6 3-14 0-14-6 0-2 1-3.500 2.500-4.500 0-1.500-2.500-3.300-5-3.300z" fill="#0c4f92" /><path d="M18 14.500c0 2.500-2 2.500-2 4s2 2.500 5 2.500c3 0 6-1 8-3.500l-1 4.500c-4 2-11 1-12.500-4-.3-2 .5-3.500 2.500-3.500z" fill="#e9e7f3" /></svg>
        </TaskIcon>
        <TaskIcon>
          <svg viewBox="0 0 30 30" className="size-[30px]"><circle cx="15" cy="15" r="14.700" fill="#fbc116" /><path d="M15 15L2.300 7.600A14.700 14.700 0 0 1 27.700 7.600L28 8H15z" fill="#e33b2e" /><path d="M2.300 7.600A14.700 14.700 0 0 0 15 29.700l6.300-11.200L8.700 18.500z" fill="#2ba24c" /><path d="M15 8h13L27 6.600 15 4z" fill="#e33b2e" /><circle cx="15" cy="15" r="7" fill="#fff" /><circle cx="15" cy="15" r="5.500" fill="#3b7ded" /></svg>
        </TaskIcon>
        <TaskIcon>
          <div className="grid size-[30px] place-items-center rounded-full bg-[#fc3f1d] text-[21px] leading-none font-bold text-white">Я</div>
        </TaskIcon>
        <TaskIcon dot>
          <svg viewBox="0 0 30 30" className="size-[30px]"><path d="M1 3h19L11 15.500z" fill="#0b3fa9" /><path d="M1 27L20 3l8 11-6 1-9.500 12z" fill="#2f77ea" /><path d="M20 3l9.500 12L20 27h-8z" fill="#7ab4fb" /><path d="M1 27L19.500 3.500 24 9 11.500 27z" fill="#2a6be2" /></svg>
        </TaskIcon>
        <TaskIcon dot><WordLogo className="size-[30px]" /></TaskIcon>
        <TaskIcon active><Palette className="h-[29px] w-[28px]" /></TaskIcon>
      </div>
      <Chev className="ml-[197px] size-[14px] rotate-180" sw={2.4} />
      <T className="ml-[27px] w-[29px]">ENG</T>
      <I className="ml-[23px] size-[20px]" sw={1.6}><path d="M0 7c6-6 14-6 20 0M3 10.500c4-4.500 10-4.500 14 0M6 14c2.500-2.800 5.500-2.800 8 0" /><circle cx="10" cy="17" r="1.300" fill="currentColor" /></I>
      <I className="ml-[10px] size-[19px]" sw={1.6}><path d="M1 7h3l5-4v14l-5-4H1zM12 7c1.500 1.500 1.500 4.500 0 6" /><path d="M15 4.500c3 3 3 8 0 11M17.500 2c4.500 4 4.500 12 0 16" stroke="#a9a9b5" /></I>
      <I className="ml-[12px] size-[20px]" sw={1.6}><path d="M8 4h7a2 2 0 0 1 2 2v8a2 2 0 0 1-2 2H3a2 2 0 0 1-2-2v-3" /><path d="M8 6.500h6.500v7H3.500V11z" fill="currentColor" /><path d="M18 8.500v3h1v-3z" fill="currentColor" /><path d="M4 0L0 6h3l-1 5 5-6.500H4.500L6 0z" fill="currentColor" stroke="none" /></I>
      <div className="mb-[4px] ml-[19px] flex w-[74px] shrink-0 flex-col items-end leading-[20px]">
        <T className="w-[37px]">22:05</T>
        <T className="w-[73px]">21.11.2023</T>
      </div>
      <svg viewBox="0 0 18 20" className="ml-[10px] h-[20px] w-[18px] fill-[#0c4a9e]"><path d="M9 0c4 0 6.500 3 6.500 6.500V11l2.300 4.500H.2L2.500 11V6.500C2.500 3 5 0 9 0zM6.500 17h5c0 3.500-5 3.500-5 0z" /></svg>
    </div>
  );
}

export default function App() {
  return (
    <div className="relative flex h-[1080px] w-[1920px] flex-col overflow-hidden bg-white font-['Open_Sans','Noto_Sans',sans-serif]">
      <TitleBar />
      <div className="flex h-[922px] shrink-0">
        <div className="flex w-[1381px] shrink-0 flex-col">
          <Toolbar />
          <Tabs />
          <Actions />
        </div>
        <SidePanel />
      </div>
      <StatusBar />
      <Taskbar />
      <div className="absolute top-[116px] left-[353px] h-[855px] w-[1520px] rounded-[9px] shadow-[0_14px_56px_rgba(0,0,0,0.42)]" />
      <Paint />
    </div>
  );
}
